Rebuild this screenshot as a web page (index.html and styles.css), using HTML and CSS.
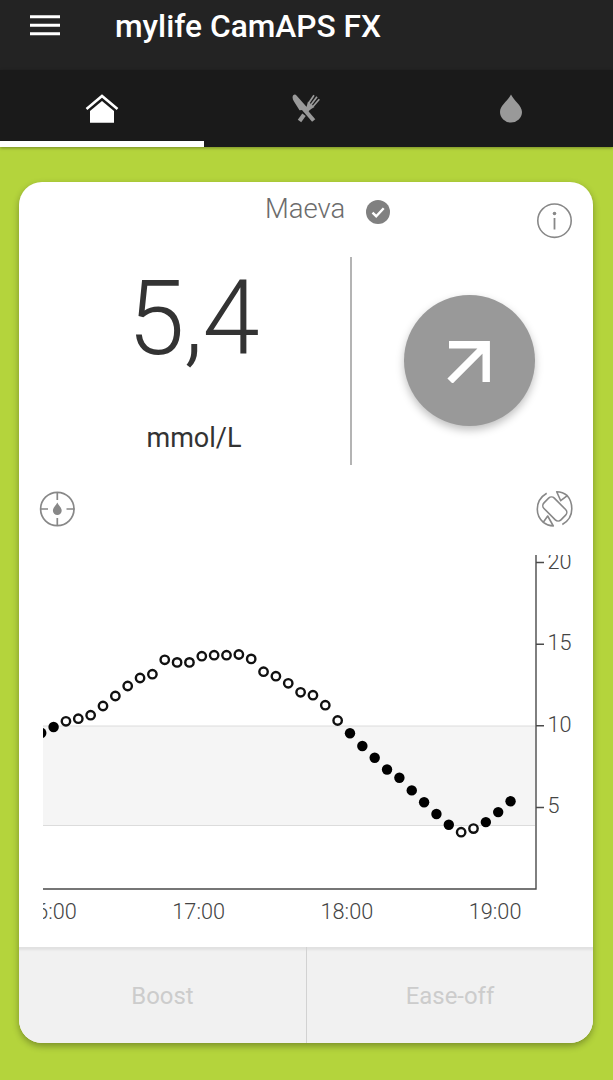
FILE: index.html
```html
<!doctype html>
<html lang="en">
<head>
<meta charset="utf-8">
<title>mylife CamAPS FX</title>
<link rel="stylesheet" href="styles.css">
</head>
<body>
<header class="appbar">
  <svg class="menu" width="30" height="22" viewBox="0 0 30 22">
    <path d="M0 1.800h30M0 10.300h30M0 18.700h30" stroke="#fff" stroke-width="3"/>
  </svg>
  <h1>mylife CamAPS FX</h1>
</header>
<nav class="tabs">
  <a class="tab active">
    <svg width="34" height="30" viewBox="0 0 34 30">
      <path d="M1.500 16L17 3l15.500 13" fill="none" stroke="#fff" stroke-width="2.600"/>
      <path d="M5 18L17 8l12 10V29.700H5z" fill="#fff"/>
    </svg>
  </a>
  <a class="tab">
    <svg width="28" height="30" viewBox="0 0 28 30">
      <g fill="none" stroke="#9a9a9a">
        <path d="M7.500 28L12 21.700" stroke-width="4.200"/>
        <path d="M11 15L21.700 27.500" stroke-width="4.200"/>
        <path d="M14.500 18l3-3.500" stroke-width="3.500"/>
        <path d="M16.800 10L22 2.300M19 11.700L25 3.800M21 13.500L27.300 6.300" stroke-width="1.700"/>
      </g>
      <path d="M1 2.500Q3 .5 4.500 2.500L16 15.500l-3.500 4-2-2.500-3 .2L2 8.500Q-.2 5 1 2.500zM14.500 14l1.500-5.500 6.500 5.500-5 3z" fill="#9a9a9a"/>
    </svg>
  </a>
  <a class="tab">
    <svg width="22" height="30" viewBox="0 0 22 30">
      <path d="M11 1.500C8 8 0 12.500 0 19a11 10.500 0 0 0 22 0C22 12.500 14 8 11 1.500z" fill="#999"/>
    </svg>
  </a>
</nav>

<main class="card">
  <div class="card-head">
    <span class="name">Maeva</span>
    <svg class="check" width="24" height="24" viewBox="0 0 24 24">
      <circle cx="12" cy="12" r="12" fill="#808080"/>
      <path d="M6.500 12.600l3.700 3.600 7.500-8" fill="none" stroke="#fff" stroke-width="2.400"/>
    </svg>
    <svg class="info" width="36" height="36" viewBox="0 0 36 36">
      <circle cx="18.500" cy="17.700" r="16.700" fill="none" stroke="#888" stroke-width="1.600"/>
      <circle cx="18.500" cy="10.500" r="1.800" fill="#888"/>
      <path d="M18.500 15v11.500" stroke="#888" stroke-width="1.800"/>
    </svg>
  </div>

  <div class="reading">
    <div class="glucose">
      <div class="value">5,4</div>
      <div class="unit">mmol/L</div>
    </div>
    <div class="trend">
      <div class="trend-circle">
        <svg width="44" height="44" viewBox="0 0 44 44">
          <path d="M2 5.700h37.200V43M3 42L38 7" fill="none" stroke="#fff" stroke-width="7.400"/>
        </svg>
      </div>
    </div>
  </div>

  <div class="tools">
    <svg width="36" height="36" viewBox="0 0 36 36">
      <circle cx="18.300" cy="18" r="16.700" fill="none" stroke="#888" stroke-width="1.700"/>
      <path d="M18.300 1v8M18.300 27v8M1 18h8M27.500 18h8" stroke="#888" stroke-width="1.700"/>
      <path d="M18.300 11.500C17 14.500 13.900 16.500 13.900 19.700a4.400 4.200 0 0 0 8.800 0C22.700 16.500 19.600 14.500 18.300 11.500z" fill="#888"/>
    </svg>
    <svg width="37" height="38" viewBox="0 0 37 38">
      <g fill="none" stroke="#888" stroke-width="1.600" stroke-linejoin="round">
        <rect x="6.800" y="11.700" width="24" height="14.600" rx="4" transform="rotate(45 18.800 19)"/>
        <path d="M10.700 3.300C4.500 7 1.300 12.500 1.300 19.300c0 5.200 2.200 9.700 6 13 2.800 2.200 6.200 3.500 10 3.700L11.700 26l-4.400 6.300"/>
        <path d="M26.300 34.500c6-3.300 9.500-9 9.500-15.700 0-5.200-1.500-9.700-4.500-13.100-2.900-2.500-6.700-4-10.600-4l4 9 6.600-5"/>
      </g>
    </svg>
  </div>

  <svg class="chart" width="550" height="375" viewBox="43 555 550 375">
    <rect x="43" y="726" width="492" height="99.500" fill="#f5f5f5"/>
    <path d="M43 726h492M43 825.500h492" stroke="#dcdcdc"/>
    <path d="M536 555v334H43" fill="none" stroke="#4a4a4a" stroke-width="1.400"/>
    <path d="M536 562.500h8M536 644.200h8M536 725.800h8M536 807.500h8" stroke="#4a4a4a" stroke-width="1.400"/>
    <g id="readings"></g>
    <g class="axis">
      <text x="547.500" y="568.500">20</text>
      <text x="547.500" y="650">15</text>
      <text x="547.500" y="731.500">10</text>
      <text x="547.500" y="813">5</text>
    </g>
    <g class="axis hours">
      <text x="50.500" y="919">16:00</text>
      <text x="198.700" y="919">17:00</text>
      <text x="346.900" y="919">18:00</text>
      <text x="495.100" y="919">19:00</text>
    </g>
  </svg>

  <div class="actions">
    <button disabled>Boost</button>
    <button disabled>Ease-off</button>
  </div>
</main>

<script>
// one reading every five minutes, as heights on the chart
var readings = [
  733, 727, 721.3, 718.7, 715.2, 706, 696, 686, 678, 674.2,
  659.8, 662.4, 662.4, 656.2, 655.2, 655.2, 654.5, 658.9, 671.7, 676.2,
  683.3, 692.3, 695.2, 705.2, 720.5, 733.3, 746, 757.7, 769.5, 777.7,
  790.4, 802.3, 814, 824.8, 832.2, 828.6, 822.1, 812.1, 801.3
];
var group = document.getElementById('readings');
for (var i = 0; i < readings.length; i++) {
  var y = readings[i];
  var inRange = y > 726 && y < 825.5;
  var dot = document.createElementNS('http://www.w3.org/2000/svg', 'circle');
  dot.setAttribute('cx', 41.25 + i * 12.35);
  dot.setAttribute('cy', y);
  dot.setAttribute('r', inRange ? 5.2 : 4.2);
  dot.setAttribute('class', inRange ? 'dot in' : 'dot out');
  group.appendChild(dot);
}
</script>
</body>
</html>
```
FILE: styles.css
```css
* {
    box-sizing: border-box;
}
body {
    margin: 0;
    height: 1080px;
    overflow: hidden;
    background: #b4d43c;
    font-family: Roboto, sans-serif;
}
svg {
    display: block;
}
.appbar {
    display: flex;
    align-items: flex-start;
    height: 70px;
    padding: 15px 30px 0;
    background: #232323;
    color: #fff;
}
.appbar h1 {
    margin: -7px 0 0 55px;
    font-size: 31.700px;
    font-weight: 500;
    line-height: 38px;
}
.tabs {
    display: grid;
    grid-template-columns: repeat(3, 1fr);
    height: 77px;
    background: #1a1a1a;
    box-shadow: 0 1px 3px rgba(0, 0, 0, .35);
}
.tab {
    display: flex;
    justify-content: center;
    padding-top: 23px;
}
.tab.active {
    border-bottom: 6px solid #fff;
}
.card {
    display: flex;
    flex-direction: column;
    width: 574px;
    height: 861px;
    margin: 35px 0 0 19px;
    border-radius: 23px;
    overflow: hidden;
    background: #fff;
    box-shadow: 0 3px 7px rgba(0, 0, 0, .32);
}
.card-head {
    display: flex;
    height: 65px;
    padding: 0 21px 0 246px;
}
.name {
    width: 101px;
    padding-top: 10px;
    color: #6c6c6c;
    font-size: 27.500px;
    font-weight: 300;
    line-height: 34px;
}
.check {
    margin-top: 18px;
}
.info {
    margin: 21px 0 0 auto;
}
.reading {
    display: grid;
    grid-template-columns: 333px 1fr;
    height: 218px;
    padding-top: 10px;
}
.glucose {
    height: 208px;
    border-right: 2px solid #b4b4b4;
    color: #333;
    text-align: center;
}
.value {
    height: 161px;
    padding: 1px 0 0 17px;
    font-size: 103px;
    font-weight: 300;
    letter-spacing: -1px;
    line-height: 122px;
}
.unit {
    padding-left: 19px;
    font-size: 27px;
    line-height: 40px;
}
.trend {
    display: flex;
    justify-content: center;
    padding: 38px 7px 0 0;
}
.trend-circle {
    display: flex;
    align-items: center;
    justify-content: center;
    width: 131px;
    height: 131px;
    border-radius: 50%;
    background: #999;
    box-shadow: 0 4px 9px rgba(0, 0, 0, .25);
}
.tools {
    display: flex;
    justify-content: space-between;
    align-items: center;
    height: 88px;
    padding: 0 20px 0 20px;
}
.chart {
    flex: none;
    margin: 2px 0 0 24px;
    overflow: hidden;
}
.dot.in {
    fill: #000;
}
.dot.out {
    fill: #fff;
    stroke: #111;
    stroke-width: 2.400px;
}
.axis {
    fill: #444;
    font-size: 21.700px;
    font-weight: 300;
}
.hours {
    text-anchor: middle;
}
.actions {
    display: grid;
    grid-template-columns: 1fr 1fr;
    height: 96px;
    margin-top: auto;
    background: #f1f1f1;
    box-shadow: inset 0 4px 2px -1px #e1e1e1;
}
.actions button {
    padding: 1px 0 0;
    border: 0;
    background: none;
    color: #ccc;
    font-family: inherit;
    font-size: 23.900px;
}
.actions button + button {
    border-left: 1px solid #d2d2d2;
}
```
